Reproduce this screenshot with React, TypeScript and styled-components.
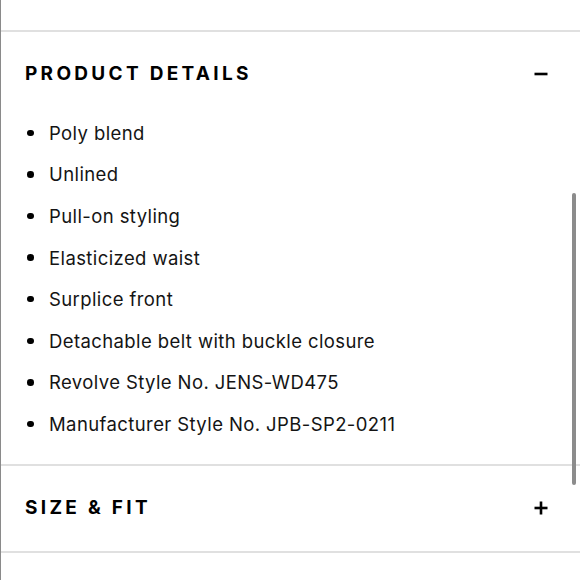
import styled, { createGlobalStyle } from "styled-components";

const GlobalStyle = createGlobalStyle`
  html, body {
    margin: 0;
    padding: 0;
    background: #fff;
  }
  body {
    font-family: "Inter", "Liberation Sans", sans-serif;
    color: #111;
  }
`;

const Page = styled.div`
  position: relative;
  height: 580px;
  overflow: hidden;
  border-left: 1px solid #8a8a8a;
  padding-top: 30px;
  box-sizing: border-box;
`;

const Section = styled.section`
  border-top: 2px solid #e0e0e0;
`;

const Header = styled.div<{ $open?: boolean }>`
  display: flex;
  align-items: center;
  justify-content: space-between;
  padding: ${(p) => (p.$open ? "30px 32px 26px 24px" : "0 32px 0 24px")};
  height: ${(p) => (p.$open ? "auto" : "85px")};
`;

const Title = styled.h2`
  margin: 0;
  font-family: "Inter", "Liberation Sans", sans-serif;
  font-size: 19px;
  line-height: 24px;
  font-weight: 700;
  letter-spacing: 3.3px;
  color: #000;
  text-transform: uppercase;
`;

const Toggle = styled.button`
  border: none;
  background: none;
  padding: 0;
  width: 14px;
  height: 14px;
  display: flex;
  align-items: center;
  justify-content: center;
  color: #000;
`;

const List = styled.ul`
  list-style: none;
  margin: 0;
  padding: 0 0 19px 0;
`;

const Item = styled.li`
  display: flex;
  align-items: center;
  height: 41.6px;
  padding-left: 26px;
  font-family: "Inter", "Liberation Sans", sans-serif;
  font-size: 18.5px;
  letter-spacing: 0.4px;
  color: #141414;

  &::before {
    content: "";
    width: 6.5px;
    height: 6.5px;
    border-radius: 50%;
    background: #000;
    margin-right: 15.5px;
    flex-shrink: 0;
  }
`;

const Scrollbar = styled.div`
  position: absolute;
  left: 571px;
  top: 193px;
  width: 4px;
  height: 292px;
  border-radius: 2px;
  background: #8c8c8c;
`;

const Minus = () => (
  <svg width="14" height="14" viewBox="0 0 14 14">
    <rect x="0.5" y="5.7" width="13" height="2.6" fill="currentColor" />
  </svg>
);

const Plus = () => (
  <svg width="14" height="14" viewBox="0 0 14 14">
    <rect x="0.5" y="5.7" width="13" height="2.6" fill="currentColor" />
    <rect x="5.7" y="0.5" width="2.6" height="13" fill="currentColor" />
  </svg>
);

const details = [
  "Poly blend",
  "Unlined",
  "Pull-on styling",
  "Elasticized waist",
  "Surplice front",
  "Detachable belt with buckle closure",
  "Revolve Style No. JENS-WD475",
  "Manufacturer Style No. JPB-SP2-0211",
];

export default function App() {
  return (
    <>
      <GlobalStyle />
      <Page>
        <Section>
          <Header $open>
            <Title>Product Details</Title>
            <Toggle aria-label="Collapse">
              <Minus />
            </Toggle>
          </Header>
          <List>
            {details.map((d) => (
              <Item key={d}>{d}</Item>
            ))}
          </List>
        </Section>
        <Section>
          <Header>
            <Title>Size &amp; Fit</Title>
            <Toggle aria-label="Expand">
              <Plus />
            </Toggle>
          </Header>
        </Section>
        <Section />
        <Scrollbar />
      </Page>
    </>
  );
}
